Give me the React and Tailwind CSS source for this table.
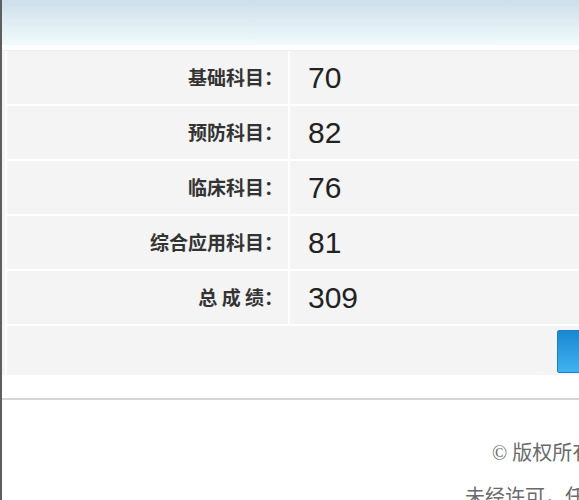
const scores = [
  { label: "基础科目：", value: "70" },
  { label: "预防科目：", value: "82" },
  { label: "临床科目：", value: "76" },
  { label: "综合应用科目：", value: "81" },
  { label: "总 成 绩：", value: "309" },
];

const cjk = { fontFamily: '"Noto Sans CJK SC", sans-serif' };

export default function App() {
  return (
    <div className="w-[579px] h-[500px] overflow-hidden bg-white border-l-2 border-[#5e5e5e]">
      {/* header band */}
      <div className="h-[45px] bg-gradient-to-b from-[#cddfec] via-[#dfedf3] to-[#f2fafb]" />
      <div className="h-[6px] bg-white border-b border-[#eeeeee]" />

      {/* score table */}
      <div className="pl-[3px] bg-[#f4f4f4]">
        <div className="grid grid-cols-[281px_1fr] gap-[2px] bg-white border-l-2 border-white">
          {scores.map((s) => (
            <div key={s.label} className="contents">
              <div
                className="h-[53px] bg-[#f4f4f4] flex items-center justify-end pr-[5px] text-[19px] font-bold text-[#333] whitespace-pre"
                style={cjk}
              >
                {s.label}
              </div>
              <div
                className="h-[53px] bg-[#f4f4f4] flex items-center pl-[18px] text-[30px] text-[#222]"
                style={{ fontFamily: '"Liberation Sans", Arial, sans-serif' }}
              >
                {s.value}
              </div>
            </div>
          ))}
          <div className="col-span-2 h-[49px] bg-[#f4f4f4] flex items-start pl-[550px] overflow-hidden">
            <button className="mt-[4px] h-[43px] w-[90px] shrink-0 rounded-[2px] border border-[#1b7fc4] bg-gradient-to-b from-[#1a87d2] to-[#3fb3ef]" />
          </div>
        </div>
      </div>

      {/* footer */}
      <div className="h-[23px] bg-white" />
      <div className="border-t-2 border-[#d6d6d6]" />
      <div
        className="pt-[39px] text-[20px] leading-[28px] text-[#6a6a6a] whitespace-nowrap"
        style={{ fontFamily: '"Liberation Serif", "Noto Sans CJK SC", serif' }}
      >
        <p className="pl-[490px]">© 版权所有 国家医学考试中心</p>
        <p className="pl-[463px] mt-[16px]">未经许可，任何单位和个人不得转载</p>
      </div>
    </div>
  );
}
